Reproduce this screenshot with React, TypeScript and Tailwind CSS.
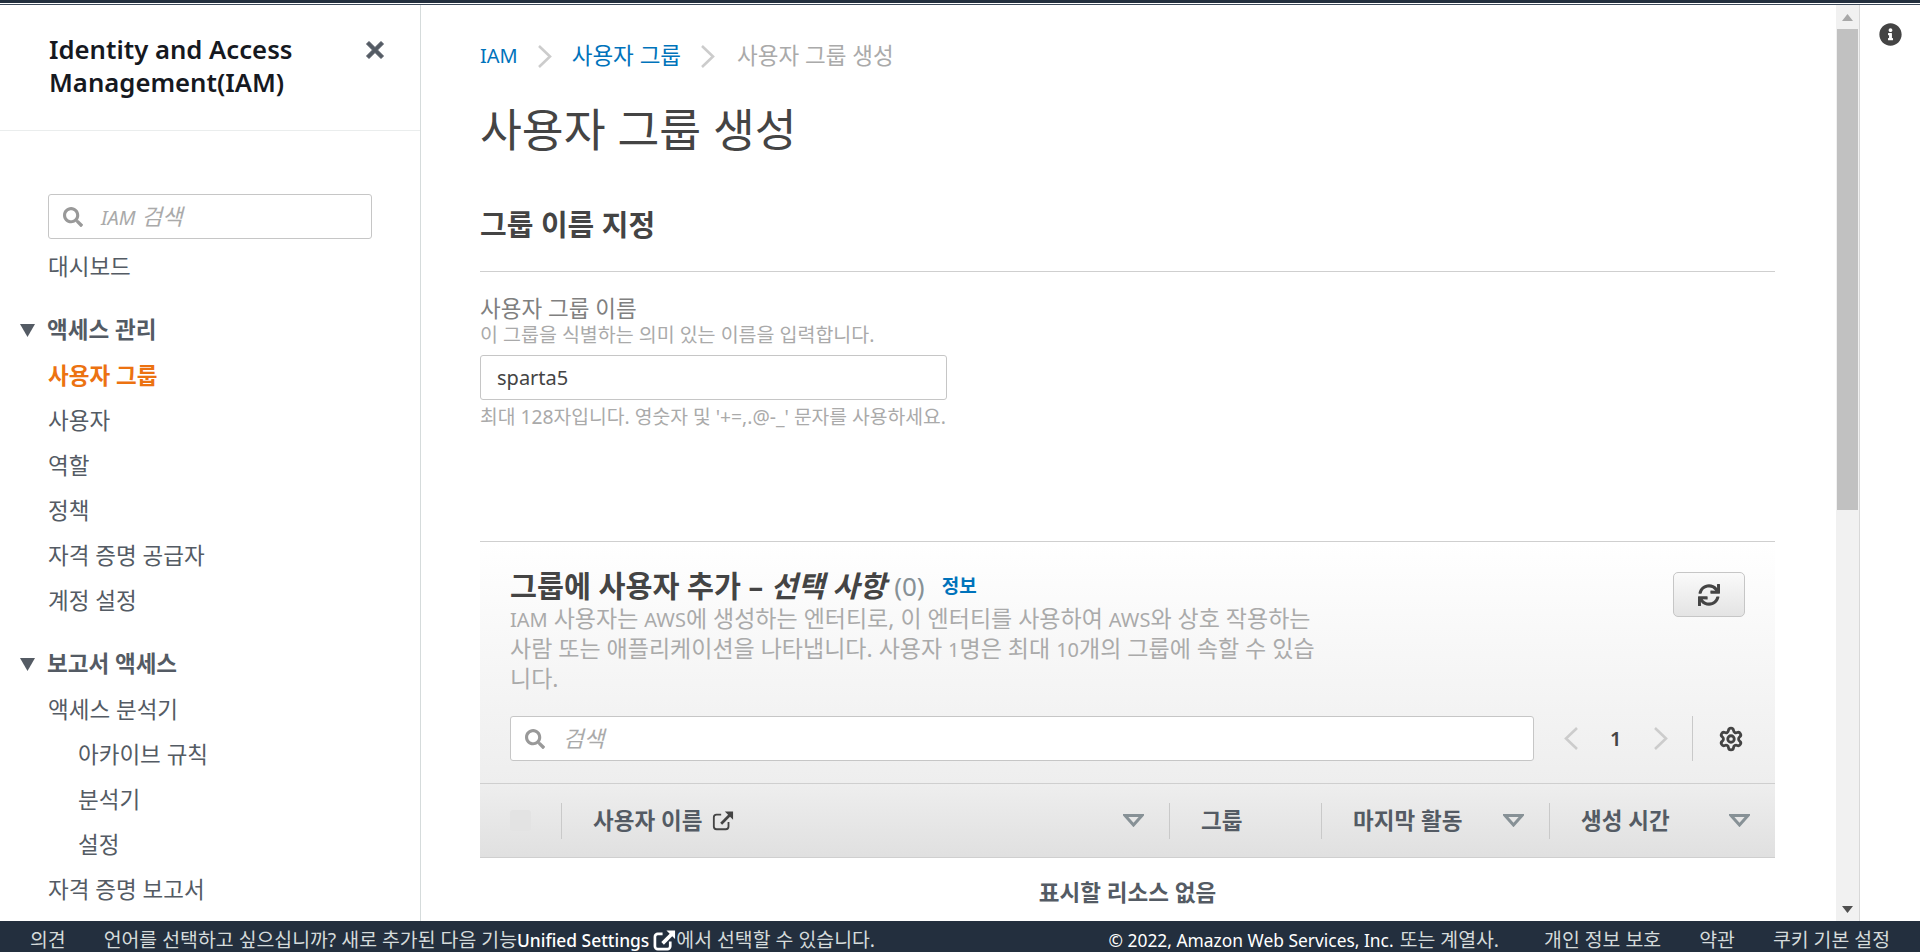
import { Settings } from "lucide-react";
import { FaInfoCircle, FaSearch, FaSync } from "react-icons/fa";

const font = { fontFamily: '"Noto Sans", "Noto Sans CJK KR", sans-serif' };

// latin runs sit smaller than the hangul around them
function L({ children }: { children: React.ReactNode }) {
  return <span className="text-[20px] leading-none">{children}</span>;
}

function Chevron({ left, className }: { left?: boolean; className?: string }) {
  return (
    <svg width="14" height="23" viewBox="0 0 14 23" className={`shrink-0 ${className ?? ""}`}>
      <path d={left ? "M13 1 2 11.5 13 22" : "M1 1l11 10.5L1 22"} fill="none" stroke="#cccccc" strokeWidth="2.6" />
    </svg>
  );
}

function ExternalIcon({ className, width = 2 }: { className: string; width?: number }) {
  return (
    <svg viewBox="0 0 24 24" className={`shrink-0 ${className}`} fill="none" stroke="currentColor" strokeWidth={width}>
      <path d="M10 5H5a3 3 0 0 0-3 3v10a3 3 0 0 0 3 3h10a3 3 0 0 0 3-3v-5" />
      <path d="M10 15 20 5" strokeWidth={width + 1} />
      <path d="M14 1.5h9v9z" fill="currentColor" stroke="none" />
    </svg>
  );
}

function NavItem({ label, active, sub }: { label: string; active?: boolean; sub?: boolean }) {
  return (
    <div
      className={`h-[45px] flex items-center text-[22.5px] ${sub ? "pl-[78px]" : "pl-[48px]"} ${
        active ? "text-[#ec7211] font-bold" : "text-[#545b64]"
      }`}
    >
      {label}
    </div>
  );
}

function NavSection({ label }: { label: string }) {
  return (
    <div className="h-[46px] flex items-center pl-[20px] gap-[12px] text-[22.5px] font-bold text-[#545b64]">
      <svg width="15" height="13" viewBox="0 0 15 13" className="shrink-0">
        <path d="M0 0h15L7.5 13z" fill="#545b64" />
      </svg>
      {label}
    </div>
  );
}

function SortIcon() {
  return (
    <svg width="21" height="13" viewBox="0 0 21 13" className="shrink-0">
      <path d="M2 1.5h17L10.5 11z" fill="none" stroke="#879196" strokeWidth="3" />
    </svg>
  );
}

function HeadCell({ label, sort, className }: { label: string; sort?: boolean; className: string }) {
  return (
    <div className={`flex items-center h-[36px] border-l border-[#c9c9c9] pl-[31px] ${className}`}>
      <span className="font-bold text-[#545b64] text-[22.5px]">{label}</span>
      {sort && <div className="ml-auto mr-[25px]"><SortIcon /></div>}
    </div>
  );
}

export default function App() {
  return (
    <div style={font} className="h-screen flex flex-col overflow-hidden bg-white">
      <div className="h-[3px] bg-[#232f3e] shrink-0" />
      <div className="h-[1px] bg-white shrink-0" />
      <div className="h-[1px] bg-[#3d4a5a] shrink-0" />
      <div className="flex-1 flex min-h-0">
        {/* Side navigation */}
        <aside className="w-[421px] shrink-0 border-r border-[#d5dbdb] overflow-hidden">
          <div className="h-[126px] border-b border-[#eaeded] pl-[49px] pr-[36px] pt-[28px] flex items-start justify-between">
            <h2 className="text-[25.7px] leading-[33px] font-semibold text-[#16191f]">
              Identity and Access
              <br />
              Management(IAM)
            </h2>
            <svg width="18" height="18" viewBox="0 0 18 18" className="mt-[8px] shrink-0">
              <path d="M3 .5l6 6 6-6L17.5 3l-6 6 6 6-2.5 2.5-6-6-6 6L.5 15l6-6-6-6z" fill="#545b64" stroke="#545b64" strokeLinejoin="round" />
            </svg>
          </div>
          <div className="mt-[63px] mx-[48px] h-[45px] w-[324px] rounded-[3px] border border-[#c6c6c6] flex items-center pl-[14px] gap-[18px]">
            <FaSearch className="text-[#999] text-[20px]" />
            <span className="italic text-[22.5px] text-[#aaaaaa]"><L>IAM</L> 검색</span>
          </div>
          <div className="mt-[5px]">
            <NavItem label="대시보드" />
          </div>
          <div className="mt-[18px]">
            <NavSection label="액세스 관리" />
            <NavItem label="사용자 그룹" active />
            <NavItem label="사용자" />
            <NavItem label="역할" />
            <NavItem label="정책" />
            <NavItem label="자격 증명 공급자" />
            <NavItem label="계정 설정" />
          </div>
          <div className="mt-[18px]">
            <NavSection label="보고서 액세스" />
            <NavItem label="액세스 분석기" />
            <NavItem label="아카이브 규칙" sub />
            <NavItem label="분석기" sub />
            <NavItem label="설정" sub />
            <NavItem label="자격 증명 보고서" />
          </div>
        </aside>

        {/* Page content */}
        <main className="flex-1 min-w-0 overflow-hidden pl-[59px] pr-[61px]">
          <div className="pt-[34px] h-[68px] flex items-center text-[22.5px]">
            <span className="text-[#0073bb] text-[20px]">IAM</span>
            <Chevron className="ml-[20px]" />
            <span className="ml-[20px] text-[#0073bb]">사용자 그룹</span>
            <Chevron className="ml-[20px]" />
            <span className="ml-[22px] text-[#aaaaaa]">사용자 그룹 생성</span>
          </div>
          <h1 className="mt-[28px] text-[45.5px] leading-[56px] text-[#444444] font-normal">사용자 그룹 생성</h1>
          <h2 className="mt-[50px] text-[29px] leading-[36px] font-bold text-[#444444]">그룹 이름 지정</h2>
          <div className="mt-[28px] border-t border-[#cfcfcf]" />
          <div className="mt-[23px] text-[22.5px] leading-[28px] text-[#808080]">사용자 그룹 이름</div>
          <div className="text-[19.5px] leading-[24px] text-[#aaaaaa]">이 그룹을 식별하는 의미 있는 이름을 입력합니다.</div>
          <div className="mt-[8px] h-[45px] w-[467px] rounded-[3px] border border-[#c6c6c6] flex items-center pl-[16px] text-[20px] text-[#444444]">
            sparta5
          </div>
          <div className="mt-[5px] text-[19.3px] leading-[24px] text-[#aaaaaa]">최대 128자입니다. 영숫자 및 '+=,.@-_' 문자를 사용하세요.</div>

          {/* Users table */}
          <section className="mt-[112px] border-t border-[#cfcfcf]">
            <div className="h-[241px] bg-gradient-to-b from-white to-[#eeeeee] pl-[30px] pr-[30px] pt-[27px] flex flex-col">
              <div className="flex justify-between">
                <div className="w-[808px]">
                  <div className="flex items-center text-[29.3px] leading-[34px] text-[#444444] font-bold whitespace-nowrap">
                    <span>그룹에 사용자 추가 – <i>선택 사항</i></span>
                    <span className="ml-[8px] text-[26px] font-normal text-[#879196]">(0)</span>
                    <span className="ml-[17px] text-[19px] text-[#0073bb]">정보</span>
                  </div>
                  <p className="text-[23px] leading-[30px] text-[#aaaaaa]">
                    <L>IAM</L> 사용자는 <L>AWS</L>에 생성하는 엔터티로, 이 엔터티를 사용하여 <L>AWS</L>와 상호 작용하는 사람 또는 애플리케이션을 나타냅니다. 사용자 <L>1</L>명은 최대 <L>10</L>개의 그룹에 속할 수 있습니다.
                  </p>
                </div>
                <button className="w-[72px] h-[45px] mt-[3px] rounded-[5px] border border-[#c6c6c6] bg-gradient-to-b from-[#fafafa] to-[#e4e4e4] flex items-center justify-center">
                  <FaSync className="text-[#444444] text-[22px]" />
                </button>
              </div>
              <div className="mt-[23px] flex items-center">
                <div className="w-[1024px] h-[45px] rounded-[3px] border border-[#c6c6c6] bg-white flex items-center pl-[14px] gap-[18px]">
                  <FaSearch className="text-[#999] text-[20px]" />
                  <span className="italic text-[22.5px] text-[#aaaaaa]">검색</span>
                </div>
                <Chevron left className="ml-[30px]" />
                <span className="ml-[32px] w-[12px] text-[20px] font-semibold text-[#444444]">1</span>
                <Chevron className="ml-[32px]" />
                <div className="ml-[24px] h-[45px] border-l border-[#c9c9c9]" />
                <Settings className="ml-[25px] w-[26px] h-[26px] text-[#444444]" strokeWidth={2.6} />
              </div>
            </div>
            <div className="h-[75px] border-t border-b border-[#cfcfcf] bg-gradient-to-b from-[#eeeeee] to-[#e0e0e0] flex items-center pl-[30px]">
              <div className="w-[21px] h-[21px] rounded-[3px] bg-[#e3e3e3] shrink-0" />
              <div className="ml-[30px] w-[608px] flex items-center h-[36px] border-l border-[#c9c9c9] pl-[31px]">
                <span className="font-bold text-[#545b64] text-[22.5px]">사용자 이름</span>
                <ExternalIcon className="ml-[10px] w-[22px] h-[22px] text-[#444444]" />
                <div className="ml-auto mr-[25px]"><SortIcon /></div>
              </div>
              <HeadCell label="그룹" className="w-[152px]" />
              <HeadCell label="마지막 활동" sort className="w-[228px]" />
              <HeadCell label="생성 시간" sort className="flex-1" />
            </div>
            <div className="h-[70px] flex items-center justify-center text-[22.5px] font-bold text-[#545b64]">
              표시할 리소스 없음
            </div>
          </section>
        </main>

        {/* Scrollbar */}
        <div className="w-[24px] shrink-0 bg-[#f1f1f1] border-r border-[#d8d8d8] flex flex-col">
          <div className="h-[24px] flex items-center justify-center">
            <svg width="11" height="7" viewBox="0 0 11 7"><path d="M5.5 0 11 7H0z" fill="#a8a8a8" /></svg>
          </div>
          <div className="h-[481px] bg-[#c1c1c1] mx-[1px]" />
          <div className="mt-auto h-[24px] flex items-center justify-center">
            <svg width="11" height="7" viewBox="0 0 11 7"><path d="M0 0h11L5.5 7z" fill="#505050" /></svg>
          </div>
        </div>

        {/* Tools rail */}
        <div className="w-[60px] shrink-0 flex justify-center pt-[18px]">
          <FaInfoCircle className="text-[#444444] text-[23px]" />
        </div>
      </div>

      {/* Footer */}
      <footer className="h-[31px] shrink-0 bg-[#232f3e] flex items-center pt-[7px] text-[19.4px] text-[#d5dbdb] pl-[30px] pr-[30px] whitespace-nowrap overflow-hidden">
        <span>의견</span>
        <span className="ml-[38px]">언어를 선택하고 싶으십니까? 새로 추가된 다음 기능</span>
        <span className="text-white text-[17.4px] font-medium">Unified Settings</span>
        <ExternalIcon className="ml-[4px] w-[23px] h-[23px] text-white" width={2.8} />
        <span>에서 선택할 수 있습니다.</span>
        <span className="ml-auto text-white text-[17.4px]">© 2022, Amazon Web Services, Inc.</span>
        <span className="ml-[6px]">또는 계열사.</span>
        <span className="ml-[45px]">개인 정보 보호</span>
        <span className="ml-[38px]">약관</span>
        <span className="ml-[38px]">쿠키 기본 설정</span>
      </footer>
    </div>
  );
}
